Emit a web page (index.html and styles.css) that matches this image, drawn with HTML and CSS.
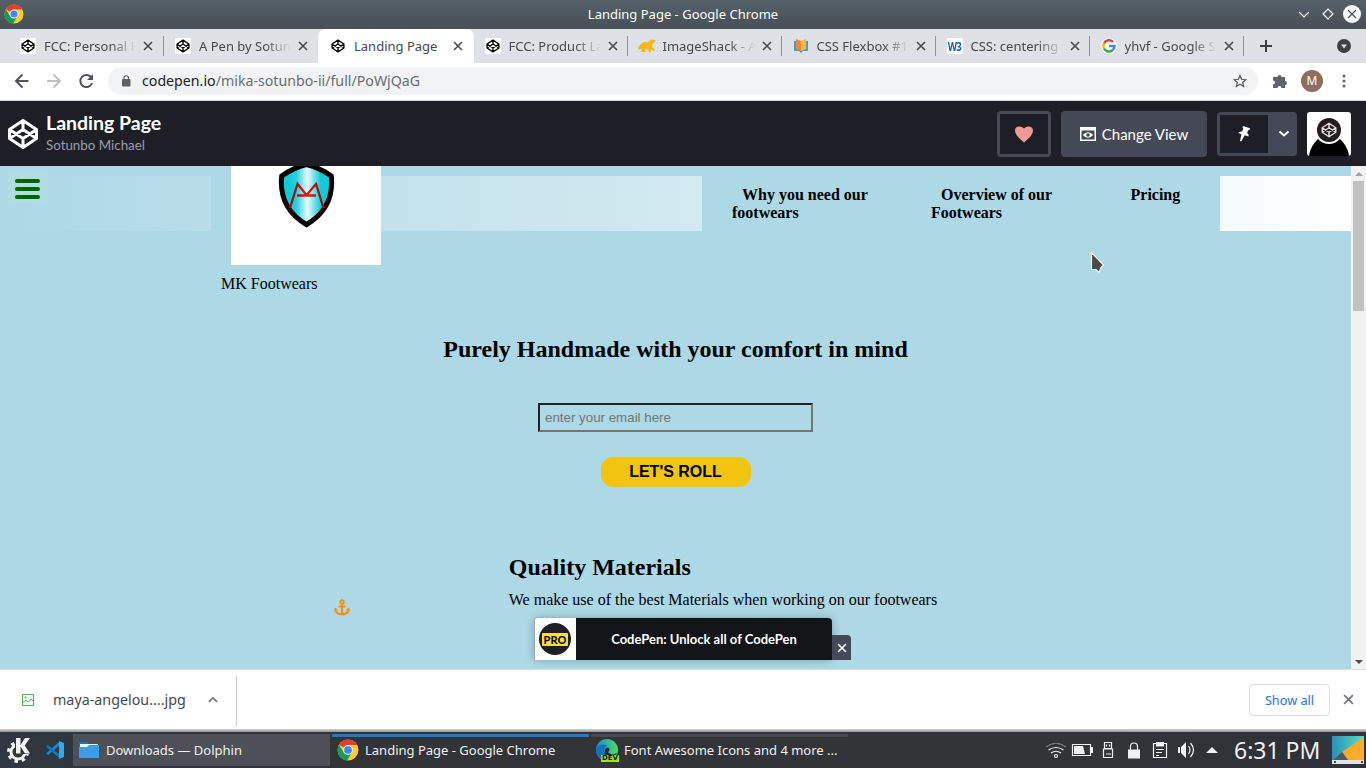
FILE: index.html
```html
<!DOCTYPE html>
<html lang="en">
<head>
<meta charset="utf-8">
<title>Landing Page</title>
<link rel="stylesheet" href="styles.css">
</head>
<body>
<svg class="defs" width="0" height="0">
  <defs>
    <symbol id="codepen" viewBox="0 0 32 32"><path d="M16 2.500 29.500 11.500v9L16 29.500 2.500 20.500V11.500ZM2.500 11.500l13.500 9 13.500-9M2.500 20.500l13.500-9 13.500 9M16 2.500v9M16 20.500v9" fill="none" stroke="currentColor" stroke-width="3" stroke-linejoin="round"/></symbol>
    <symbol id="chrome" viewBox="0 0 20 20"><circle cx="10" cy="10" r="9.500" fill="#fc3"/><path d="M10 10 1.800 5.200A9.500 9.500 0 0 1 18.300 5.500H10Z" fill="#e0402f"/><path d="M1.800 5.200A9.500 9.500 0 0 0 9.200 19.500L13.500 12 10 10 6 12Z" fill="#169c57"/><circle cx="10" cy="10" r="4.500" fill="#eef"/><circle cx="10" cy="10" r="3.500" fill="#4285f4"/></symbol>
    <symbol id="close" viewBox="0 0 10 10"><path d="m1 1 8 8M9 1 1 9" fill="none" stroke="currentColor" stroke-width="1.600"/></symbol>
  </defs>
</svg>

<header class="titlebar">
  <svg class="titlebar-logo" width="20" height="20"><use href="#chrome"/></svg>
  <span class="titlebar-text">Landing Page - Google Chrome</span>
  <svg class="titlebar-controls" width="68" height="20" viewBox="0 0 68 20"><g fill="none" stroke="#fcfcfc" stroke-width="1.200"><path d="m5 8 5 5 5-5M34 5l5 5-5 5-5-5Z"/></g><circle cx="58" cy="10" r="9" fill="#fcfcfc"/><path d="m54 6 8 8M62 6l-8 8" stroke="#475057" stroke-width="1.200"/></svg>
</header>

<nav class="tabs">
  <div class="tab wide sep"><span class="fav"><svg width="14" height="14"><use href="#codepen"/></svg></span><span class="tab-title">FCC: Personal Portfolio</span><svg class="tab-x"><use href="#close"/></svg></div>
  <div class="tab wide"><span class="fav"><svg width="14" height="14"><use href="#codepen"/></svg></span><span class="tab-title">A Pen by Sotunbo</span><svg class="tab-x"><use href="#close"/></svg></div>
  <div class="tab active"><span class="fav"><svg width="14" height="14"><use href="#codepen"/></svg></span><span class="tab-title">Landing Page</span><svg class="tab-x"><use href="#close"/></svg></div>
  <div class="tab sep"><span class="fav"><svg width="14" height="14"><use href="#codepen"/></svg></span><span class="tab-title">FCC: Product Landing</span><svg class="tab-x"><use href="#close"/></svg></div>
  <div class="tab sep"><span class="fav plain"><svg width="18" height="16" viewBox="0 0 18 16"><path d="M.5 9 3 6l3-2 4 .2L13 1.500l4 .5.5 1.500-3.500 3 .5 3 2.500 2-.5 1.500-3.500-1-.5 2.500h-1.500l-1-3-2-1-1.500 1.500 1.500 2H2.500l1.800-3-3.800.5Z" fill="#f8b71c"/></svg></span><span class="tab-title">ImageShack - All</span><svg class="tab-x"><use href="#close"/></svg></div>
  <div class="tab sep"><span class="fav plain"><svg width="16" height="16" viewBox="0 0 16 16"><path d="M1 3v10h5l2 2 2-2h5V3" fill="#4b9cc5"/><path d="m3 1 5 2v10l-5-2Z" fill="#f58536"/><path d="M13 1 8 3v10l5-2Z" fill="#fdb840"/></svg></span><span class="tab-title">CSS Flexbox #1.</span><svg class="tab-x"><use href="#close"/></svg></div>
  <div class="tab sep"><span class="fav w3"><span>W3</span></span><span class="tab-title">CSS: centering things</span><svg class="tab-x"><use href="#close"/></svg></div>
  <div class="tab sep"><span class="fav round"><svg width="14" height="14" viewBox="0 0 14 14" fill="none" stroke-width="2.500"><path d="M2 4.500A5.500 5.500 0 0 1 11 3" stroke="#ea4335"/><path d="M2 4.500a5.500 5.500 0 0 0 0 5" stroke="#fbbc05"/><path d="M2 9.500a5.500 5.500 0 0 0 8.700 1.500" stroke="#34a853"/><path d="M7 7h5.500a5.500 5.500 0 0 1-1.800 4" stroke="#4285f4"/></svg></span><span class="tab-title">yhvf - Google Search</span><svg class="tab-x"><use href="#close"/></svg></div>
  <svg class="new-tab" width="12" height="12" viewBox="0 0 12 12"><path d="M6 0v12M0 6h12" stroke="#3c4043" stroke-width="2"/></svg>
  <svg class="tab-search" width="14" height="14" viewBox="0 0 14 14"><circle cx="7" cy="7" r="7" fill="#3c4043"/><path d="M4 5.500h6l-3 4Z" fill="#dee1e6"/></svg>
</nav>

<div class="toolbar">
  <svg width="96" height="18" viewBox="0 0 96 18" fill="none" stroke-width="2"><path d="M15.500 9H3M9.500 2.500 3 9l6.500 6.500" stroke="#50545a"/><path d="M34 9h13M40.500 2.500 47 9l-6.500 6.500" stroke="#bdc1c6"/><path d="M78.500 6A6 6 0 1 0 79 11" stroke="#50545a"/><path d="M80 2v6h-6Z" fill="#50545a"/></svg>
  <div class="address">
    <svg width="10" height="12" viewBox="0 0 10 12"><rect x="1" y="4" width="8.500" height="7.500" rx="1" fill="#5f6368"/><path d="M3 5V3a2.250 2.250 0 0 1 4.500 0v2" fill="none" stroke="#5f6368" stroke-width="1.200"/></svg>
    <span class="url"><b>codepen.io</b>/mika-sotunbo-ii/full/PoWjQaG</span>
    <svg width="14" height="14" viewBox="0 0 14 14"><path d="m7 1.500 1.700 3.800 4.100.4-3.100 2.700 1 4L7 10.300l-3.700 2.100 1-4L1.200 5.700l4.100-.4Z" fill="none" stroke="#5f6368" stroke-width="1.300"/></svg>
  </div>
  <svg class="ext" width="16" height="16" viewBox="0 0 16 16"><path d="M1 4h4.500a2 2 0 1 1 4 0H13v4a2 2 0 1 1 0 4v3H9.500a2 2 0 0 0-4 0H1v-3.500a2 2 0 0 0 0-4Z" fill="#5f6368"/></svg>
  <span class="profile">M</span>
  <svg class="dots" width="4" height="14" viewBox="0 0 4 14" fill="#5f6368"><circle cx="2" cy="2" r="1.500"/><circle cx="2" cy="7" r="1.500"/><circle cx="2" cy="12" r="1.500"/></svg>
</div>

<div class="pen-header">
  <svg class="pen-logo" width="32" height="32"><use href="#codepen"/></svg>
  <div class="pen-names"><h1>Landing Page</h1><span>Sotunbo Michael</span></div>
  <div class="pen-btn heart"><svg width="20" height="18" viewBox="0 0 20 18"><path d="M10 17.500C6 14 1 10 1 5.500 1 1 7 0 10 3.500 13 0 19 1 19 5.500c0 4.500-5 8.500-9 12Z" fill="#f19994"/></svg></div>
  <div class="pen-btn view"><svg width="16" height="14" viewBox="0 0 16 14"><path d="M.75 1h14.500v12.250H.750Z" fill="none" stroke="#fff" stroke-width="1.500"/><path d="M0 0h16v3.500H0Z" fill="#fff"/><path d="M2.800 8q5.200-5.500 10.400 0-5.200 5.500-10.400 0Z" fill="#fff"/><circle cx="8" cy="8" r="1.800" fill="#444857"/></svg>Change View</div>
  <div class="pen-btn pin"><span class="pin-main"><svg width="14" height="17" viewBox="0 0 14 17"><path d="m6 1 7 2.300-.5 1.700-1.500.3-.8 2.800q2 1.500 1.300 3.400L7.700 10.300 4.200 16.500 3 16l1.500-6.800L1.200 8Q2 6.200 5 6.400l1.300-2.700-.8-1.200Z" fill="#fff"/></svg></span><svg width="12" height="8" viewBox="0 0 12 8"><path d="m1.500 1.500 4.500 4 4.500-4" fill="none" stroke="#fff" stroke-width="2"/></svg></div>
  <svg class="avatar" width="44" height="44" viewBox="0 0 44 44"><path d="M0 0h44v44H0Z" fill="#fff"/><path d="M2 44c1-8 5-13 9-17h22c4 4 8 9 9 17Z"/><circle cx="22" cy="18" r="14" fill="#fff"/><circle cx="22" cy="18" r="12" fill="#231f20"/><svg x="14" y="10" width="16" height="16" color="#ddd"><use href="#codepen"/></svg></svg>
</div>

<div class="viewport">
  <main class="page">
    <div class="page-nav">
      <div class="burger"><i></i><i></i><i></i></div>
      <div class="brand">
        <svg width="150" height="99" viewBox="231 166 150 99"><defs><linearGradient id="sh"><stop offset=".15" stop-color="#12c9d8"/><stop offset=".3" stop-color="#2bcfdd"/><stop offset=".52" stop-color="#e6f9fd"/><stop offset=".78" stop-color="#12c9d8"/></linearGradient><linearGradient id="bd" x1="0" x2="0" y1="0" y2="1"><stop offset=".45"/><stop offset=".75" stop-color="#280505"/><stop offset="1"/></linearGradient><radialGradient id="rd" gradientUnits="userSpaceOnUse" cx="307" cy="194" r="15"><stop stop-color="#f21b12"/><stop offset="1" stop-color="#8b1416"/></radialGradient></defs><path d="M231 166h150v99H231Z" fill="#fff"/><path d="M306.500 164.500q13 3 24.800 11.500c2 20-5 37-24.800 48.500-19.800-11.500-26.800-28.500-24.800-48.500q11.800-8.500 24.800-11.500Z" fill="url(#sh)" stroke="url(#bd)" stroke-width="5"/><path d="m290 208 7.500-24 9 11 9.500-11 7.500 24M297 195.500h19" fill="none" stroke="url(#rd)" stroke-width="2.300"/></svg>
        <span>MK Footwears</span>
      </div>
      <ul class="links"><li>Why you need our footwears</li><li>Overview of our Footwears</li><li>Pricing</li></ul>
    </div>
    <h2 class="tagline">Purely Handmade with your comfort in mind</h2>
    <input class="email" type="text" placeholder="enter your email here">
    <button class="roll">LET'S ROLL</button>
    <section class="feature">
      <svg width="18" height="17" viewBox="0 0 18 17" fill="none" stroke="#ff8c00"><circle cx="9" cy="3" r="1.800" stroke-width="1.700"/><path d="M9 5v10.500M5.500 7.500h7M2 10.500C3 14 5.500 15.300 9 15.300s6-1.300 7-4.800" stroke-width="2"/><path d="M.5 11.500 2.500 8.500l2.500 3ZM13 11.500l2.500-3 2 3Z" fill="#ff8c00" stroke="none"/></svg>
      <div><h2>Quality Materials</h2><p>We make use of the best Materials when working on our footwears</p></div>
    </section>
    <aside class="promo">
      <div class="promo-ad"><span class="promo-logo"><b><em>PRO</em></b></span><strong>CodePen: Unlock all of CodePen</strong></div>
      <div class="promo-x"><svg width="10" height="10"><use href="#close"/></svg></div>
    </aside>
    <svg class="cursor" width="16" height="24" viewBox="0 0 16 24"><path d="M1.500 1.500v17h4.500l3 3 2-5 2.500-2.500Z" fill="#4a4a4a" stroke="#f5f5f5" stroke-width="1.200"/></svg>
  </main>
  <div class="scroll"><i class="arrow up"></i><div class="thumb"></div><i class="arrow down"></i></div>
</div>

<div class="downloads">
  <div class="file">
    <svg width="12" height="12" viewBox="0 0 12 12" fill="none" stroke="#4caf50"><path d="M.5.5h11v11H.5ZM1 8.500 4 6l2.500 2L9 5l2.500 2.500"/><circle cx="3.500" cy="3.500" r=".6"/></svg>
    <span>maya-angelou....jpg</span>
    <svg width="10" height="7" viewBox="0 0 10 7"><path d="m.8 5.800 4.200-4 4.200 4" fill="none" stroke="#75797d" stroke-width="1.700"/></svg>
  </div>
  <div class="show-all">Show all</div>
  <svg class="bar-x" width="11" height="11"><use href="#close"/></svg>
</div>

<footer class="taskbar">
  <svg class="kde" width="26" height="26" viewBox="0 0 26 26"><circle cx="12" cy="15" r="7" fill="none" stroke="#f0f2f4" stroke-width="3"/><circle cx="12" cy="15" r="9.500" fill="none" stroke="#f0f2f4" stroke-width="3" stroke-dasharray="3.500 3.960"/><path d="M9 0h16v17H9Z" fill="#30353c"/><path d="M10 1h4.500v7L19 1h5l-5.300 7.500L24 16.500h-5l-4.500-7v7H10Z" fill="#f0f2f4"/></svg>
  <svg class="code" width="20" height="20" viewBox="0 0 20 20"><path d="m1 13.500 13.500-12v4L3 15Z" fill="#128bd2"/><path d="M1 6.500 3 5l11.500 9.500v4Z" fill="#0879bf"/><path d="M14 1 19 3v14l-5 2Z" fill="#2fa9f0"/></svg>
  <div class="task dolphin"><svg width="22" height="20" viewBox="0 0 22 20"><path d="M1 2h8l2 2h9v5H1Z" fill="#1873b8"/><path d="M2 4h18v5H2Z" fill="#f2f7fa"/><path d="M1 7h8l2-2h10v13H1Z" fill="#3e9be9"/></svg>Downloads — Dolphin</div>
  <div class="task chrome"><svg width="22" height="22"><use href="#chrome"/></svg>Landing Page - Google Chrome</div>
  <div class="task edge"><span class="edge-icon"><svg width="22" height="22" viewBox="0 0 22 22"><defs><linearGradient id="ed"><stop stop-color="#1590d8"/><stop offset="1" stop-color="#50db67"/></linearGradient></defs><circle cx="11" cy="11" r="11" fill="url(#ed)"/><path d="M.2 12C0 5 8 4 12 7c-5 0-5 9 2 12-6 5-13 0-13.800-7Z" fill="#1272bd"/><path d="M10 9c3-2 5 2 2 4 2 3 6 3 9 1-2 6-11 5-12 0-.5-2 0-4 1-5Z" fill="#242a30"/></svg><b>DEV</b></span>Font Awesome Icons and 4 more ...</div>
  <svg class="tray" width="176" height="24" viewBox="1044 738 176 24"><g fill="none" stroke="#eff0f1" stroke-width="1.200"><path d="M1046 747q10-7.500 20 0" stroke="#77797d"/><path d="M1048.500 750q7.500-5 15 0M1051 753q5-3.500 10 0"/><circle cx="1056" cy="756" r="1.500"/><path d="M1072.500 744.500h18v11h-18Z"/><path d="M1104.500 742.500h7v6h-7ZM1103.500 749h9v8.500h-9ZM1106.500 744.500v2M1109.500 744.500v2M1106 754h5"/><path d="M1130.500 750v-3.500a3.500 3.500 0 0 1 7 0v3.500"/><path d="M1153.500 743.500h13v14h-13ZM1156 749.500h8M1156 752.500h6M1156 755.500h3"/><path d="M1188.500 746q3 4 0 8M1190.500 743q6 7 0 14"/></g><path d="M1091 747h2v6h-2ZM1074 746h9l2 8h-11ZM1128 749.500h12v9h-12ZM1156 742h8v4.500h-8ZM1178 747h2v6h-2ZM1181 747l5-5v16l-5-5ZM1206 753l6-6 6 6Z" fill="#eff0f1"/></svg>
  <span class="clock">6:31 PM</span>
  <svg class="desk" width="32" height="28" viewBox="0 0 32 28"><defs><linearGradient id="dk"><stop stop-color="#2a91b5"/><stop offset="1" stop-color="#53dfc5"/></linearGradient></defs><path d="M0 0h32v28H0Z" fill="url(#dk)"/><path d="M32 1 10 16l9 12h13Z" fill="#ffaa2b"/><path d="m10 16-10 9v3h19Z" fill="#4a5b5e"/><path d="M0 24h32v4H0Z" fill="#dfe3e4"/><path d="M2 25h2v2H2ZM29 25h2v2h-2Z" fill="#444"/></svg>
</footer>
</body>
</html>
```
FILE: styles.css
```css
* { box-sizing: border-box; }
body { margin: 0; width: 1366px; height: 768px; overflow: hidden; display: flex; flex-direction: column; font-family: "Noto Sans", sans-serif; font-size: 13px; }
svg { display: block; flex: none; }
h1, h2, p, ul { margin: 0; padding: 0; }
.defs { position: absolute; }

.titlebar { height: 29px; flex: none; display: grid; grid-template-columns: 68px 1fr 68px; align-items: center; padding: 0 4px 1px; background: linear-gradient(#566068, #475057); color: #fcfcfc; }
.titlebar-text { text-align: center; }

.tabs { height: 34px; flex: none; display: flex; align-items: center; padding-left: 9px; background: #dee1e6; color: #45494d; }
.tab { width: 154px; height: 34px; flex: none; display: flex; align-items: center; padding-left: 11px; }
.tab.wide { width: 155px; }
.tab.wide + .tab.wide { width: 154px; }
.tab.sep { background: linear-gradient(#8d9196, #8d9196) right center / 1px 20px no-repeat; }
.tab.active { width: 156px; background: #fff; border-radius: 8px 8px 0 0; }
.tab.active + .tab { width: 153.500px; padding-left: 10.500px; }
.fav { width: 16px; height: 16px; flex: none; display: flex; align-items: center; justify-content: center; border-radius: 2px; background: #fff; color: #000; }
.fav.plain { background: none; }
.fav.round { border-radius: 50%; }
.fav.w3 { color: #1b5c9c; font: bold 12px "Open Sans", sans-serif; letter-spacing: -1px; }
.fav.w3 span { transform: scaleX(.8); }
.tab-title { width: 92px; margin-left: 8px; overflow: hidden; white-space: nowrap; -webkit-mask-image: linear-gradient(90deg, #000 72%, transparent); mask-image: linear-gradient(90deg, #000 72%, transparent); }
.active .fav { margin-left: 1px; }
.active .tab-title { -webkit-mask-image: none; mask-image: none; }
.tab-x { width: 10px; height: 10px; margin-left: 7px; }
.new-tab { margin-left: 16px; }
.tab-search { margin-left: auto; margin-right: 15px; }

.toolbar { height: 38px; flex: none; display: flex; align-items: center; padding: 0 20px 2px 13px; background: #fff; border-bottom: 1px solid #d5d7da; }
.address { width: 1150px; height: 28px; margin-left: -1px; display: flex; align-items: center; padding: 0 11px 0 13px; border-radius: 14px; background: #f1f3f4; }
.url { flex: 1; margin-left: 11px; font-size: 14.200px; color: #6a6e73; }
.url b { font-weight: 400; color: #202124; }
.ext { margin-left: 14px; }
.profile { width: 22px; height: 22px; margin-left: 13px; border-radius: 50%; background: #8d6e63; color: #fff; font-size: 12px; line-height: 22px; text-align: center; }
.dots { margin-left: auto; }

.pen-header { height: 65px; flex: none; display: flex; align-items: center; padding: 0 15px 0 7px; background: #1e1f26; color: #fff; font-family: Lato, sans-serif; }
.pen-names { flex: 1; margin-left: 7px; padding-bottom: 2px; }
.pen-names h1 { font-size: 19.500px; line-height: 24px; font-weight: 700; }
.pen-names span { display: block; color: #9b9dad; font-size: 13.350px; line-height: 20px; }
.pen-btn { height: 46px; margin-right: 10px; display: flex; align-items: center; justify-content: center; border-radius: 4px; background: #444857; }
.heart { width: 54px; border: 3px solid #444857; background: #1e1f26; }
.view { width: 146px; gap: 6px; font-size: 15px; }
.pin { width: 80px; height: 44px; padding: 3px; justify-content: flex-start; gap: 10px; }
.pin-main { width: 48px; height: 38px; display: flex; align-items: center; justify-content: center; background: #1e1f26; }
.avatar { border-radius: 3px; }

.viewport { height: 503px; flex: none; display: flex; }
.page { position: relative; width: 1351px; display: flex; flex-direction: column; align-items: center; background: #add8e6; color: #000; font-family: "Liberation Serif", serif; font-size: 16px; line-height: 18px; }
.page-nav { width: 100%; height: 55px; flex: none; margin-top: 10px; display: flex; align-items: flex-start; background: linear-gradient(90deg, #add8e6, #d4eaf1 52%, #f5fbfd 90%, #fff); }
.burger { width: 39px; height: 30px; margin: -3px 164px 0 8px; padding: 6px 7px 4px; display: flex; flex-direction: column; justify-content: space-between; background: #b1dce1; }
.burger i { width: 25px; height: 4px; border-radius: 2px; background: #006400; }
.brand { width: 170px; height: 65px; margin-top: -10px; padding-left: 10px; background: #add8e6; }
.brand svg { margin-left: 10px; }
.brand span { display: block; margin-top: 10px; }
.links { width: 518px; height: 55px; margin-left: 321px; padding: 10px 0 0 30px; display: flex; list-style: none; background: #add8e6; font-weight: 700; text-indent: 10px; }
.links li { width: 150px; margin-right: 49px; }
.links li:nth-child(2) { margin-right: 39.500px; }
.links li:last-child { width: 90px; margin-right: 0; }
h2 { font-size: 24px; line-height: 27px; }
.tagline { margin-top: 105px; }
.email { width: 275px; height: 29px; margin-top: 40px; padding: 0 5px; border: 2px inset #767676; background: transparent; font: 13.333px "Liberation Sans", sans-serif; }
.roll { width: 150px; height: 30px; margin: 25px 0 0 1px; padding: 0 7px 0 6px; border: 0; border-radius: 12px; background: #f1c40f; color: #000; font: bold 16px "Liberation Sans", sans-serif; }
.feature { width: 100%; margin-top: 67px; display: flex; padding-left: 332.500px; }
.feature > svg { margin: 45px 158.300px 0 0; }
.feature p { margin-top: 10px; }
.promo { position: absolute; left: 534px; top: 452px; display: flex; align-items: flex-end; color: #fff; font-family: Lato, sans-serif; }
.promo-ad { width: 298px; height: 42px; display: flex; align-items: center; overflow: hidden; border-radius: 4px 4px 0 0; background: #131417; box-shadow: 0 0 8px #0004; }
.promo-logo { width: 42px; height: 42px; display: flex; align-items: center; justify-content: center; background: #fff; border-left: 1px solid #aaa; }
.promo-logo b { width: 32px; height: 32px; margin-right: 1px; display: flex; align-items: center; justify-content: center; border-radius: 50%; background: #1e1f26; }
.promo-logo em { padding: 0 2px; border-radius: 1px; background: #ffdd40; color: #111; font: 900 11px/13px Lato, sans-serif; }
.promo strong { flex: 1; font-size: 13px; text-align: center; }
.promo-x { width: 19px; height: 25px; display: flex; align-items: center; justify-content: center; padding-top: 1px; border-radius: 0 4px 0 0; background: #444857; }
.cursor { position: absolute; left: 1090px; top: 85px; }
.scroll { width: 15px; display: flex; flex-direction: column; align-items: center; padding: 6px 0 5px; background: #f1f1f1; }
.arrow { border: 4px solid transparent; border-top: 0; border-bottom-color: #a3a3a3; }
.arrow.down { margin-top: auto; transform: rotate(180deg); border-bottom-color: #505050; }
.thumb { width: 11px; height: 130px; margin-top: 5px; background: #c1c1c1; }

.downloads { height: 63px; flex: none; display: flex; align-items: center; padding: 0 12px 3px 0; border-top: 1px solid #dadce0; background: linear-gradient(#fff 59px, #d2d5d5 59px, #8f9495); color: #45494d; }
.file { width: 237px; height: 50px; margin-right: auto; margin-top: 2px; display: flex; align-items: center; padding: 0 0 2px 22px; border-right: 1px solid #ccc; font-size: 14.300px; }
.file span { margin: 0 22px 0 19px; }
.show-all { width: 81px; height: 32px; margin-right: 13px; border: 1px solid #dadce0; border-radius: 4px; color: #1a73e8; font-size: 12.700px; line-height: 30px; text-align: center; }
.bar-x { color: #75797d; }

.taskbar { height: 36px; flex: none; display: flex; align-items: center; background: linear-gradient(90deg, #2f3740, #333437 25%, #333438 80%, #303139); color: #eff0f1; }
.kde { margin-left: 6px; }
.code { margin-left: 13px; }
.task { width: 257px; height: 32px; margin-right: 2px; display: flex; align-items: center; gap: 6px; white-space: nowrap; padding-left: 5px; }
.chrome, .edge { background: linear-gradient(#47494d 3px, transparent 3px); }
.dolphin { margin-left: 8px; background: #4d5057; }
.chrome { background: linear-gradient(#2378c8 3px, transparent 3px); }
.edge-icon { position: relative; }
.edge-icon b { position: absolute; left: 5px; bottom: -1px; padding: 0 1px; background: #9be800; color: #111; font: bold 7px/7px "DejaVu Sans", sans-serif; }
.tray { margin-left: 194px; }
.clock { width: 99px; margin-left: 14px; margin-right: -1px; white-space: nowrap; font-size: 23px; line-height: 32px; }
.desk { margin-right: 2px; }
```
